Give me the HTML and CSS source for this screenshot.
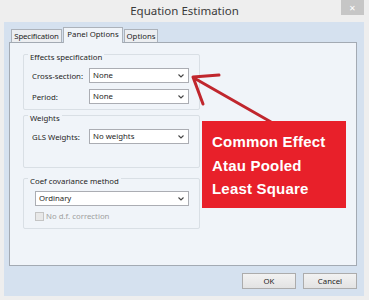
FILE: index.html
```html
<!DOCTYPE html>
<html lang="en">

<head>
	<meta charset="UTF-8">
	<meta name="viewport" content="width=device-width, initial-scale=1.0">
	<title>Equation Estimation</title>
	<link rel="stylesheet" href="styles.css">
</head>

<body>
	<div class="window">
		<div class="titlebar">
			<span></span>
			<span class="title">Equation Estimation</span>
			<span class="close">&#x2715;</span>
		</div>

		<div class="frame">
			<div class="tabs">
				<div class="tab tab-spec">Specification</div>
				<div class="tab tab-active">Panel Options</div>
				<div class="tab tab-opt">Options</div>
			</div>

			<div class="panel">
				<div class="group group-effects">
					<span class="group-label">Effects specification</span>
					<div class="row">
						<span class="row-label">Cross-section:</span>
						<div class="combo">None<svg class="chev" width="6" height="4" viewBox="0 0 6 4"><path d="M0.5 0.5 L3 3 L5.5 0.5" fill="none" stroke="#444" stroke-width="1.1"/></svg></div>
					</div>
					<div class="row">
						<span class="row-label">Period:</span>
						<div class="combo">None<svg class="chev" width="6" height="4" viewBox="0 0 6 4"><path d="M0.5 0.5 L3 3 L5.5 0.5" fill="none" stroke="#444" stroke-width="1.1"/></svg></div>
					</div>
				</div>

				<div class="group group-weights">
					<span class="group-label">Weights</span>
					<div class="row">
						<span class="row-label">GLS Weights:</span>
						<div class="combo">No weights<svg class="chev" width="6" height="4" viewBox="0 0 6 4"><path d="M0.5 0.5 L3 3 L5.5 0.5" fill="none" stroke="#444" stroke-width="1.1"/></svg></div>
					</div>
				</div>

				<div class="group group-coef">
					<span class="group-label">Coef covariance method</span>
					<div class="combo combo-wide">Ordinary<svg class="chev" width="6" height="4" viewBox="0 0 6 4"><path d="M0.5 0.5 L3 3 L5.5 0.5" fill="none" stroke="#444" stroke-width="1.1"/></svg></div>
					<div class="check-row">
						<span class="checkbox"></span>
						<span class="check-label">No d.f. correction</span>
					</div>
				</div>
			</div>

			<div class="buttons">
				<div class="btn">OK</div>
				<div class="btn">Cancel</div>
			</div>
		</div>

		<!-- annotation over the dialog -->
		<svg class="arrow" width="369" height="300" viewBox="0 0 369 300">
			<g fill="none" stroke="#c0262d" stroke-width="3" stroke-linecap="round" stroke-linejoin="round">
				<path d="M271 122 L194 78" />
				<path d="M219 75 L193 77 L203 104" />
			</g>
		</svg>
		<div class="note">
			Common Effect<br>
			Atau Pooled<br>
			Least Square
		</div>
	</div>
</body>

</html>
```

FILE: styles.css
```css
* {
	margin: 0;
	padding: 0;
	box-sizing: border-box;
}

body {
	background: #f0f0f0;
	font-family: "Noto Sans", "Open Sans", sans-serif;
	font-size: 7.8px;
	color: #1e1e1e;
}

.window {
	position: relative;
	width: 369px;
	height: 300px;
	background: #eeeeee;
	overflow: hidden;
}

.titlebar {
	height: 22px;
	display: grid;
	grid-template-columns: 1fr auto 1fr;
	align-items: start;
}

.title {
	font-size: 11.5px;
	line-height: 22px;
	color: #3a3a3a;
}

.close {
	justify-self: end;
	width: 23px;
	height: 15px;
	margin-right: 5px;
	background: #c6c6c6;
	color: #fff;
	font-size: 8px;
	line-height: 15px;
	text-align: center;
}

.frame {
	height: 274px;
	margin: 0 5px 0 4px;
	background: #d5e1ef;
	padding: 5px 7px 0 5px;
}

.tabs {
	display: flex;
	align-items: flex-end;
	height: 15px;
	padding-left: 2px;
}

.tab {
	height: 13px;
	border: 1px solid #acb2ba;
	border-bottom: none;
	margin-right: 1px;
	background: #eceef1;
	line-height: 12px;
	text-align: center;
	white-space: nowrap;
}

.tab-spec {
	width: 51px;
	letter-spacing: -0.15px;
}

.tab-opt {
	width: 34px;
}

.tab-active {
	position: relative;
	z-index: 1;
	width: 60px;
	height: 16px;
	margin-bottom: -1px;
	background: #f0f4f9;
	line-height: 13px;
}

.panel {
	height: 224px;
	border: 1px solid #a3aab3;
	background: #f0f4f9;
	padding: 11px 0 0 13px;
}

.group {
	width: 177px;
	border: 1px solid #d9dfe5;
	border-radius: 2px;
	padding: 0 10px 0 7px;
}

.group-effects {
	height: 56px;
}

.group-weights {
	height: 53px;
	margin-top: 5px;
}

.group-coef {
	height: 51px;
	margin-top: 10px;
}

.group-label {
	display: inline-block;
	margin-top: -4px;
	margin-left: -3px;
	padding: 0 2px;
	background: #f0f4f9;
	line-height: 12px;
	vertical-align: top;
}

.row {
	display: flex;
	align-items: center;
	margin-top: 3px;
	padding-left: 1px;
}

.row + .row {
	margin-top: 6px;
}

.row-label {
	width: 57px;
}

.combo {
	position: relative;
	flex: 1;
	height: 15px;
	border: 1px solid #abadb3;
	background: #fff;
	padding-left: 3px;
	line-height: 13px;
}

.chev {
	position: absolute;
	right: 4px;
	top: 5px;
}

.combo-wide {
	margin: 2px 0 0 4px;
}

.check-row {
	display: flex;
	align-items: center;
	gap: 2px;
	margin: 5px 0 0 4px;
	color: #a0a0a0;
}

.checkbox {
	width: 9px;
	height: 9px;
	border: 1px solid #c4c4c4;
	background: #e8e8e8;
}

.buttons {
	display: flex;
	justify-content: flex-end;
	gap: 7px;
	margin-top: 7px;
}

.btn {
	width: 54px;
	height: 16px;
	border: 1px solid #acacac;
	background: linear-gradient(#f2f2f2, #e3e3e3);
	line-height: 14px;
	text-align: center;
}

.arrow {
	position: absolute;
	left: 0;
	top: 0;
}

.note {
	position: absolute;
	left: 202px;
	top: 121px;
	width: 144px;
	height: 87px;
	background: #e8202a;
	color: #fff;
	font-family: "Liberation Sans", Arial, sans-serif;
	font-weight: bold;
	font-size: 15px;
	line-height: 23.5px;
	padding: 9px 0 0 10px;
	letter-spacing: 0.2px;
}
```
